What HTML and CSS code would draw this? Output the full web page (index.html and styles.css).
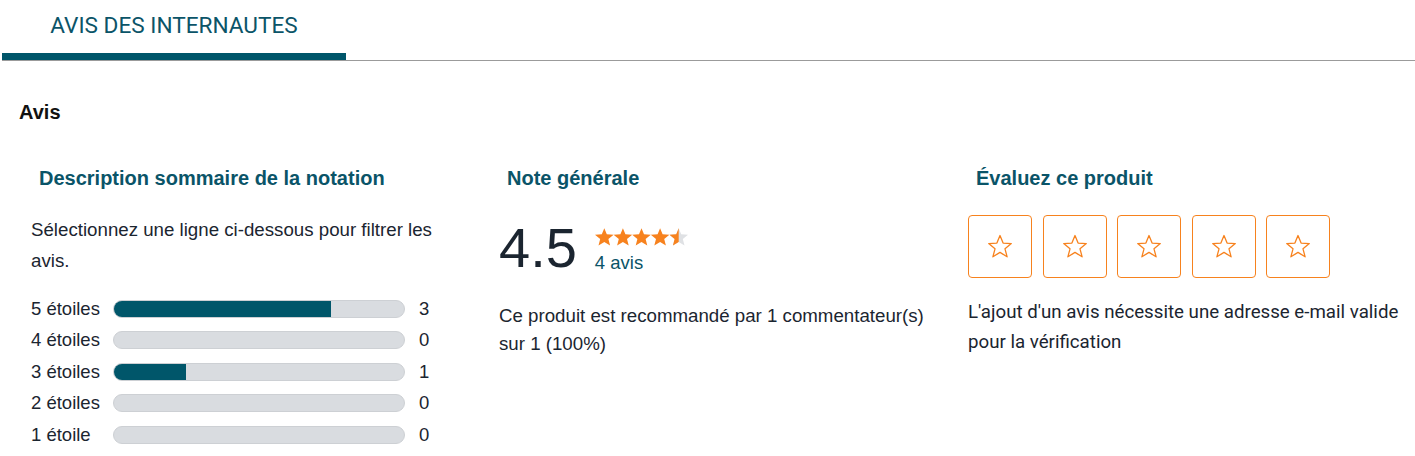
FILE: index.html
```html
<!DOCTYPE html>
<html lang="fr">
<head>
<meta charset="utf-8">
<title>Avis des internautes</title>
<link rel="stylesheet" href="styles.css">
</head>
<body>
<div class="tabs">
  <div class="tab active">AVIS DES INTERNAUTES</div>
</div>

<h2 class="section-title">Avis</h2>

<div class="grid">
  <section class="col col-summary">
    <h3 class="col-title">Description sommaire de la notation</h3>
    <p class="text">Sélectionnez une ligne ci-dessous pour filtrer les avis.</p>
    <div class="bars">
      <div class="bar-row"><span class="bar-label">5 étoiles</span><span class="bar"><span class="bar-fill" style="width:75%"></span></span><span class="bar-count">3</span></div>
      <div class="bar-row"><span class="bar-label">4 étoiles</span><span class="bar"><span class="bar-fill" style="width:0%"></span></span><span class="bar-count">0</span></div>
      <div class="bar-row"><span class="bar-label">3 étoiles</span><span class="bar"><span class="bar-fill" style="width:25%"></span></span><span class="bar-count">1</span></div>
      <div class="bar-row"><span class="bar-label">2 étoiles</span><span class="bar"><span class="bar-fill" style="width:0%"></span></span><span class="bar-count">0</span></div>
      <div class="bar-row"><span class="bar-label">1 étoile</span><span class="bar"><span class="bar-fill" style="width:0%"></span></span><span class="bar-count">0</span></div>
    </div>
  </section>

  <section class="col col-overall">
    <h3 class="col-title">Note générale</h3>
    <div class="rating">
      <span class="rating-value">4.5</span>
      <div class="rating-side">
        <svg class="stars" width="94" height="19" viewBox="0 0 94 19" aria-hidden="true">
          <defs>
            <path id="st" d="M9.3 0.2 L11.8 6.3 L18.6 6.7 L13.4 10.9 L15.1 17.6 L9.3 13.9 L3.5 17.6 L5.2 10.9 L0 6.7 L6.8 6.3 Z"/>
            <clipPath id="half"><rect x="0" y="0" width="9.3" height="19"/></clipPath>
          </defs>
          <use href="#st" x="0" fill="#f7821e"/>
          <use href="#st" x="18.6" fill="#f7821e"/>
          <use href="#st" x="37.2" fill="#f7821e"/>
          <use href="#st" x="55.8" fill="#f7821e"/>
          <g transform="translate(74.4 0)">
            <use href="#st" fill="#dfe1e4"/>
            <use href="#st" fill="#f7821e" clip-path="url(#half)"/>
          </g>
        </svg>
        <span class="rating-count">4 avis</span>
      </div>
    </div>
    <p class="text text-tight">Ce produit est recommandé par 1 commentateur(s) sur 1 (100%)</p>
  </section>

  <section class="col col-rate">
    <h3 class="col-title">Évaluez ce produit</h3>
    <div class="star-buttons">
      <button class="star-btn" aria-label="1 étoile"><svg width="26" height="25" viewBox="0 0 26 25"><path d="M13 1.5 L16.1 9.1 L24.3 9.6 L18 14.8 L20.1 22.8 L13 18.4 L5.9 22.8 L8 14.8 L1.7 9.6 L9.9 9.1 Z" fill="none" stroke="#f7821e" stroke-width="1.3" stroke-linejoin="round"/></svg></button>
      <button class="star-btn" aria-label="2 étoiles"><svg width="26" height="25" viewBox="0 0 26 25"><path d="M13 1.5 L16.1 9.1 L24.3 9.6 L18 14.8 L20.1 22.8 L13 18.4 L5.9 22.8 L8 14.8 L1.7 9.6 L9.9 9.1 Z" fill="none" stroke="#f7821e" stroke-width="1.3" stroke-linejoin="round"/></svg></button>
      <button class="star-btn" aria-label="3 étoiles"><svg width="26" height="25" viewBox="0 0 26 25"><path d="M13 1.5 L16.1 9.1 L24.3 9.6 L18 14.8 L20.1 22.8 L13 18.4 L5.9 22.8 L8 14.8 L1.7 9.6 L9.9 9.1 Z" fill="none" stroke="#f7821e" stroke-width="1.3" stroke-linejoin="round"/></svg></button>
      <button class="star-btn" aria-label="4 étoiles"><svg width="26" height="25" viewBox="0 0 26 25"><path d="M13 1.5 L16.1 9.1 L24.3 9.6 L18 14.8 L20.1 22.8 L13 18.4 L5.9 22.8 L8 14.8 L1.7 9.6 L9.9 9.1 Z" fill="none" stroke="#f7821e" stroke-width="1.3" stroke-linejoin="round"/></svg></button>
      <button class="star-btn" aria-label="5 étoiles"><svg width="26" height="25" viewBox="0 0 26 25"><path d="M13 1.5 L16.1 9.1 L24.3 9.6 L18 14.8 L20.1 22.8 L13 18.4 L5.9 22.8 L8 14.8 L1.7 9.6 L9.9 9.1 Z" fill="none" stroke="#f7821e" stroke-width="1.3" stroke-linejoin="round"/></svg></button>
    </div>
    <p class="text text-roboto">L'ajout d'un avis nécessite une adresse e-mail valide pour la vérification</p>
  </section>
</div>
</body>
</html>
```

FILE: styles.css
```css
html, body {
  margin: 0;
  padding: 0;
  background: #ffffff;
}

body {
  font-family: "Liberation Sans", Arial, sans-serif;
  color: #1b2530;
  overflow: hidden;
}

.tabs {
  margin-left: 2px;
  display: flex;
  border-bottom: 1px solid #9b9b9b;
}

.tab {
  font-family: Roboto, "Liberation Sans", sans-serif;
  font-size: 22.6px;
  line-height: 26px;
  color: #0b5468;
  width: 248px;
  padding: 13px 48px 14px;
  flex: 0 0 auto;
  text-align: center;
  white-space: nowrap;
}

.tab.active {
  border-bottom: 7px solid #00566a;
}

.section-title {
  margin: 39px 0 0 19px;
  font-size: 20px;
  line-height: 24px;
  font-weight: bold;
  color: #111111;
}

.grid {
  display: grid;
  grid-template-columns: 468px 469px 1fr;
  padding-left: 19px;
  margin-top: 42px;
}

.col {
  padding-left: 12px;
  padding-right: 28px;
}

.col-rate {
  padding-right: 8px;
}

.col-title {
  margin: 0 0 24px;
  padding-left: 8px;
  font-size: 20px;
  line-height: 24px;
  font-weight: bold;
  color: #0a5468;
}

.text {
  margin: 0;
  font-size: 18.7px;
  line-height: 31px;
}

.text-tight {
  line-height: 28px;
}

.text-roboto {
  font-family: Roboto, "Liberation Sans", sans-serif;
  font-size: 18.7px;
  line-height: 30px;
  margin-top: 19px;
}

/* Summary bars */
.bars {
  margin-top: 17px;
}

.bar-row {
  display: flex;
  align-items: center;
  height: 31.5px;
  font-size: 18.5px;
}

.bar-label {
  width: 82px;
  white-space: nowrap;
}

.bar {
  width: 292px;
  height: 18px;
  box-sizing: border-box;
  border: 1px solid #cdd0d4;
  border-radius: 9px;
  background: #d9dce0;
  overflow: hidden;
  display: flex;
}

.bar-fill {
  display: block;
  height: 100%;
  margin: -1px 0 -1px -1px;
  padding: 1px 0;
  background: #00566a;
}

.bar-count {
  margin-left: 14px;
}

/* Overall */
.col-overall .col-title {
  margin-bottom: 30px;
}

.rating {
  display: flex;
  align-items: flex-start;
  margin-bottom: 26px;
}

.rating-value {
  font-size: 56px;
  line-height: 56px;
  color: #1b2530;
}

.rating-side {
  display: flex;
  flex-direction: column;
  margin-left: 18px;
  padding-top: 8px;
}

.stars {
  display: block;
}

.rating-count {
  margin-top: 5px;
  font-size: 18.5px;
  line-height: 22px;
  color: #0a5468;
}

/* Rate */
.col-rate .col-title {
  margin-bottom: 25px;
}

.star-buttons {
  display: flex;
  gap: 10.5px;
}

.star-btn {
  width: 64px;
  height: 63px;
  box-sizing: border-box;
  border: 1px solid #f7821e;
  border-radius: 4px;
  background: #ffffff;
  padding: 0;
  display: flex;
  align-items: center;
  justify-content: center;
  cursor: pointer;
}

.star-btn svg {
  display: block;
}
```
